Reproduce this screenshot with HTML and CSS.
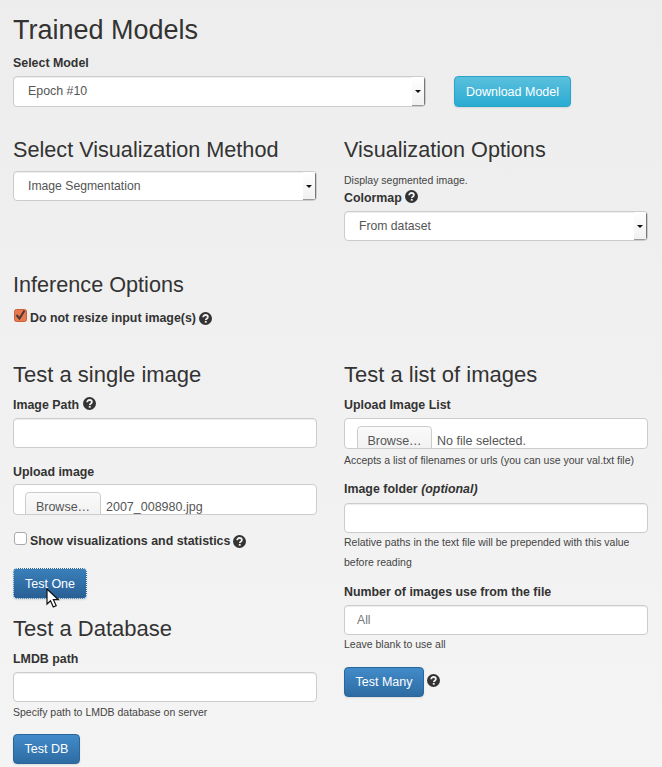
FILE: index.html
```html
<!DOCTYPE html>
<html lang="en">
<head>
    <meta charset="UTF-8">
    <title>Trained Models</title>
    <link rel="stylesheet" href="styles.css">
</head>
<body>
    <svg class="defs" width="0" height="0">
        <symbol id="help" viewBox="0 0 13 13">
            <circle cx="6.5" cy="6.5" r="6.5" fill="#333"/>
            <path d="M4.2 5.2c0-1.4 1-2.2 2.3-2.2s2.4.8 2.4 2c0 1.700-2.100 1.700-2.100 3" fill="none" stroke="#f0f0f0" stroke-width="1.800"/>
            <rect x="5.800" y="8.900" width="1.900" height="1.800" fill="#f0f0f0"/>
        </symbol>
    </svg>

    <div class="container">
        <h1>Trained Models</h1>
        <label class="field-label">Select Model</label>
        <div class="model-row">
            <div class="select select-model">
                <span class="select-text">Epoch #10</span>
                <span class="select-arrow"></span>
            </div>
            <button class="btn btn-info">Download Model</button>
        </div>

        <div class="columns method-row">
            <div>
                <h2 class="upper">Select Visualization Method</h2>
                <div class="select select-method">
                    <span class="select-text">Image Segmentation</span>
                    <span class="select-arrow"></span>
                </div>
            </div>
            <div>
                <h2 class="upper">Visualization Options</h2>
                <p class="help-block first">Display segmented image.</p>
                <label class="field-label colormap-label">Colormap <svg class="help-icon"><use href="#help"/></svg></label>
                <div class="select select-method">
                    <span class="select-text">From dataset</span>
                    <span class="select-arrow"></span>
                </div>
            </div>
        </div>

        <h2 class="upper inference-title">Inference Options</h2>
        <div class="check-row inference-check">
            <svg class="check-on" viewBox="0 0 13 13" width="13" height="13">
                <rect x="0.500" y="0.500" width="12" height="12" rx="2" fill="#e9784f" stroke="#c9623c"/>
                <path d="M2.500 6l3 3.500 5-8" fill="none" stroke="#4a3a34" stroke-width="2"/>
            </svg>
            <span>Do not resize input image(s)</span>
            <svg class="help-icon"><use href="#help"/></svg>
        </div>

        <div class="columns test-row">
            <div>
                <h2>Test a single image</h2>
                <label class="field-label">Image Path <svg class="help-icon"><use href="#help"/></svg></label>
                <input class="text-input" type="text">
                <label class="field-label next">Upload image</label>
                <div class="file-input file-left">
                    <span class="browse">Browse…</span>
                    <span class="file-name">2007_008980.jpg</span>
                </div>
                <div class="check-row single-check">
                    <input class="check-off" type="checkbox">
                    <span>Show visualizations and statistics</span>
                    <svg class="help-icon"><use href="#help"/></svg>
                </div>
                <div class="cursor-wrap">
                    <button class="btn btn-primary btn-focus">Test One</button>
                    <svg class="cursor" width="14" height="21" viewBox="0 0 14 21">
                        <path d="M1 1v15l3.500-3.300 2.800 6.300 2.900-1.300-2.800-6h5z" fill="#fff" stroke="#111" stroke-width="1.200"/>
                    </svg>
                </div>
                <h2 class="db-title">Test a Database</h2>
                <label class="field-label">LMDB path</label>
                <input class="text-input" type="text">
                <p class="help-block">Specify path to LMDB database on server</p>
                <button class="btn btn-primary btn-db">Test DB</button>
            </div>
            <div>
                <h2>Test a list of images</h2>
                <label class="field-label">Upload Image List</label>
                <div class="file-input">
                    <span class="browse">Browse…</span>
                    <span class="file-name">No file selected.</span>
                </div>
                <p class="help-block after-file">Accepts a list of filenames or urls (you can use your val.txt file)</p>
                <label class="field-label folder-label">Image folder <em>(optional)</em></label>
                <input class="text-input" type="text">
                <p class="help-block tight">Relative paths in the text file will be prepended with this value before reading</p>
                <label class="field-label number-label">Number of images use from the file</label>
                <input class="text-input" type="text" placeholder="All">
                <p class="help-block tight">Leave blank to use all</p>
                <div class="many-row">
                    <button class="btn btn-primary">Test Many</button>
                    <svg class="help-icon"><use href="#help"/></svg>
                </div>
            </div>
        </div>
    </div>
</body>
</html>
```

FILE: styles.css
```css
html, body {
    margin: 0;
    height: 767px;
    overflow: hidden;
}
body {
    font-family: 'Liberation Sans', Arial, sans-serif;
    font-size: 12.4px;
    color: #333;
    background: linear-gradient(#ededed, #f4f4f4);
}
.defs {
    position: absolute;
}
.container {
    padding: 0 14px 0 13px;
}
h1 {
    font-size: 27px;
    font-weight: 400;
    line-height: 33px;
    margin: 0 0 7px;
    padding-top: 14px;
}
h2 {
    font-size: 22px;
    font-weight: 400;
    line-height: 24px;
    margin: 0;
}
h2.upper {
    font-size: 21.65px;
}
.field-label {
    display: block;
    font-weight: 700;
    line-height: 18px;
    margin-bottom: 4px;
}
.model-row {
    display: flex;
    align-items: flex-start;
    gap: 28px;
}
.columns {
    display: grid;
    grid-template-columns: 304px 304px;
    column-gap: 27px;
}
.select {
    display: flex;
    justify-content: space-between;
    background: #fff;
    border: 1px solid #ccc;
    border-radius: 4px;
    box-sizing: border-box;
    box-shadow: inset 0 1px 1px rgba(0, 0, 0, 0.075);
    color: #555;
    overflow: hidden;
}
.select-model {
    width: 413px;
    height: 31px;
    line-height: 29px;
}
.select-method {
    width: 304px;
    height: 30px;
    line-height: 28px;
    margin-top: 9px;
}
.select-text {
    padding-left: 14px;
    font-size: 12.2px;
}
.select-model .select-text {
    font-size: 12.4px;
}
.select-arrow {
    position: relative;
    width: 12px;
    background: linear-gradient(#fff, #f1f1f1);
    border-right: 1px solid #777;
    border-bottom: 1px solid #999;
}
.select-arrow::after {
    content: "";
    position: absolute;
    left: 3px;
    top: 50%;
    margin-top: -1px;
    border-left: 3px solid transparent;
    border-right: 3px solid transparent;
    border-top: 3px solid #111;
}
.btn {
    font-family: inherit;
    font-size: 12.5px;
    color: #fff;
    height: 30px;
    padding: 0 11px;
    border-radius: 4px;
    cursor: pointer;
    box-shadow: 0 1px 2px rgba(0, 0, 0, 0.1);
}
.btn-info {
    width: 117px;
    height: 31px;
    padding: 0;
    background: linear-gradient(#5bc0de, #2aabd2);
    border: 1px solid #28a4c9;
}
.btn-primary {
    background: linear-gradient(#428bca, #2d6ca2);
    border: 1px solid #2b669a;
}
.btn-focus {
    width: 74px;
    height: 31px;
    padding: 0;
    background: linear-gradient(#3a7fba, #285f94);
    outline: 1px dotted #fff;
    outline-offset: -1px;
}
.btn-db {
    display: block;
    width: 67px;
    padding: 0;
    margin-top: 12px;
}
.method-row {
    margin-top: 31px;
}
.help-block {
    font-size: 10.5px;
    line-height: 20px;
    margin: 0;
    color: #444;
}
.help-block.first {
    margin-top: 11px;
    line-height: 14px;
}
.help-block.after-file {
    margin-top: 1px;
}
.help-block.tight {
    margin-top: -1px;
}
.colormap-label {
    margin: 2px 0 -5px;
}
.help-icon {
    width: 13px;
    height: 13px;
    vertical-align: -1px;
}
.inference-title {
    margin-top: 32px;
}
.check-row {
    display: flex;
    align-items: center;
    gap: 3px;
    font-weight: 700;
}
.inference-check {
    margin-top: 14px;
}
.check-on {
    margin: -5px 0 0 1px;
}
.check-off {
    appearance: none;
    width: 13px;
    height: 13px;
    margin: -5px 0 0 1px;
    background: #fff;
    border: 1px solid #aaa;
    border-radius: 3px;
}
.test-row {
    margin-top: 38px;
}
.test-row h2 + .field-label {
    margin-top: 9px;
}
.text-input {
    display: block;
    width: 304px;
    height: 30px;
    box-sizing: border-box;
    padding: 0 12px;
    font-family: inherit;
    font-size: 12.2px;
    background: #fff;
    border: 1px solid #ccc;
    border-radius: 4px;
    box-shadow: inset 0 1px 1px rgba(0, 0, 0, 0.075);
}
.text-input::placeholder {
    color: #777;
}
.field-label.next {
    margin-top: 15px;
    margin-bottom: 3px;
}
.folder-label {
    margin-top: 10px;
    margin-bottom: 5px;
}
.number-label {
    margin-top: 11px;
}
.file-input {
    display: flex;
    gap: 5px;
    width: 304px;
    height: 31px;
    box-sizing: border-box;
    padding: 7px 0 0 12px;
    background: #fff;
    border: 1px solid #ccc;
    border-radius: 4px;
    overflow: hidden;
    color: #555;
    font-size: 12.5px;
    line-height: 28px;
}
.browse {
    width: 73px;
    height: 30px;
    text-align: center;
    flex: none;
    background: linear-gradient(#fafafa, #eee);
    border: 1px solid #ccc;
    border-radius: 4px;
}
.file-left {
    padding-left: 11px;
}
.file-left .browse {
    width: 74px;
}
.file-name {
    line-height: 30px;
}
.single-check {
    margin-top: 19px;
}
.cursor-wrap {
    position: relative;
    margin-top: 20px;
}
.cursor-wrap .btn {
    display: block;
}
.cursor {
    position: absolute;
    left: 33px;
    top: 20px;
}
.db-title {
    margin-top: 18px;
}
.db-title + .field-label {
    margin-top: 10px;
}
.many-row {
    display: flex;
    align-items: flex-start;
    gap: 3px;
    margin-top: 13px;
}
.many-row .btn {
    width: 80px;
    padding: 0;
}
.many-row .help-icon {
    margin-top: 7px;
}
```
